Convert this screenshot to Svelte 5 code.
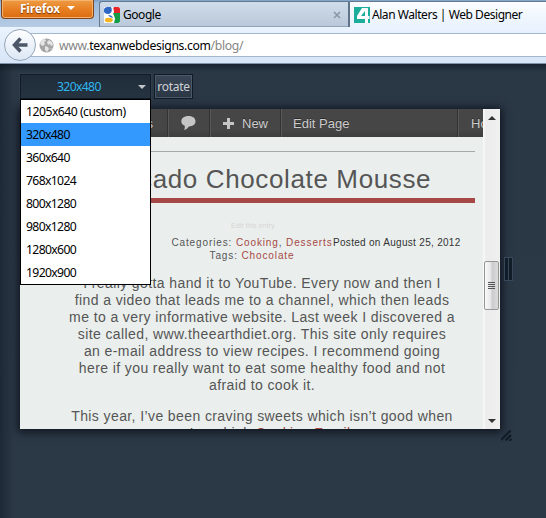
<script>
  const sizes = ['1205x640 (custom)', '320x480', '360x640', '768x1024', '800x1280', '980x1280', '1280x600', '1920x900'];
  const selected = '320x480';
  const lines = [
    'I really gotta hand it to YouTube. Every now and then I',
    'find a video that leads me to a channel, which then leads',
    'me to a very informative website. Last week I discovered a',
    'site called, www.theearthdiet.org. This site only requires',
    'an e-mail address to view recipes. I recommend going',
    'here if you really want to eat some healthy food and not',
    'afraid to cook it.'
  ];
</script>

<div class="window">
  <header class="chrome">
    <div class="tabs">
      <div class="firefox"><span>Firefox</span><i></i></div>
      <div class="tab google">
        <svg class="fav" width="16" height="16" viewBox="0 0 16 16">
          <path fill="#fff" d="M0 0h16v16H0z" />
          <path fill="#e8252a" d="M9 0h5a2 2 0 0 1 2 2v4h-6z" />
          <path fill="#159a45" d="M9 6h7v8a2 2 0 0 1-2 2h-4l1-4z" />
          <path fill="#2f68c4" d="M0 3a4 3 0 0 1 4-3h3q2 4-1 6.500Q2 8 0 5z" />
          <path fill="#fff" d="M8 0h2L9 1.500q1.500 3-.5 5Q11 9 10.500 12L9 15V10L5 8l3-3z" />
          <path fill="#2f68c4" d="M4 8q4 0 5 3l-3-1z" />
          <ellipse cx="4.800" cy="13" rx="4" ry="2.300" fill="#f5b321" />
        </svg>
        <span class="name">Google</span>
        <svg class="close" width="8" height="8" viewBox="0 0 8 8"><path d="M1 1l6 6M7 1L1 7" stroke="#8b97a5" stroke-width="1.700" /></svg>
      </div>
      <div class="tab active">
        <svg class="fav" width="16" height="16" viewBox="0 0 16 16">
          <path fill="#1cae9a" d="M0 0h16v16H0z" />
          <path fill="#fff" fill-rule="evenodd" d="M8 1h6v8h1.500v3H14v4h-3v-4H3V9zM11 4L7 9h4z" />
        </svg>
        <span class="name">Alan Walters | Web Designer</span>
      </div>
    </div>
    <div class="nav">
      <div class="url">
        <svg class="globe" width="15" height="15" viewBox="0 0 15 15">
          <circle cx="7.500" cy="7.500" r="7" fill="#a5a5a5" />
          <path fill="#e5e5e5" d="M3 2l3-1 1 2-2 1 1 2-2 2-2-1-1-2zM8 4l2-2 3 2 1 3-2 1-1-2-2 1zM6 8l3 1 1 2-2 3-2-2zM12 10l1 0-2 2z" />
        </svg>
        <span><em>www.</em>texanwebdesigns.com<em>/blog/</em></span>
      </div>
      <div class="back">
        <svg width="16" height="16" viewBox="0 0 16 16"><path d="M8.500 1.500L2.500 8l6 6.500M3 8h12.500" fill="none" stroke="#4b5767" stroke-width="3.500" /></svg>
      </div>
    </div>
  </header>

  <main>
    <div class="toolbar">
      <div class="select">
        <span>{selected}</span><i></i>
        <ul class="menu">
          {#each sizes as size}
            <li class:selected={size === selected}>{size}</li>
          {/each}
        </ul>
      </div>
      <div class="rotate">rotate</div>
    </div>

    <div class="device">
      <div class="page">
        <nav class="admin">
          <div class="cell sites">s</div>
          <div class="cell bubble">
            <svg width="15" height="14" viewBox="0 0 15 14"><path fill="#c5c5c5" d="M7.500 0C12 0 14.500 2.300 14.500 5.300S12 10.500 8 10.500Q6 13.500 3 14q1.300-2 .7-4.200Q.3 8.500.3 5.300C.3 2.300 3 0 7.500 0z" /></svg>
          </div>
          <div class="cell new">
            <svg width="11" height="11" viewBox="0 0 11 11"><path d="M5.500 0v11M0 5.500h11" stroke="#c5c5c5" stroke-width="3" /></svg>
            New
          </div>
          <div class="cell edit">Edit Page</div>
          <div class="cell howdy">Howdy</div>
        </nav>
        <article>
          <h1>Avocado Chocolate Mousse</h1>
          <div class="editlink">Edit this entry</div>
          <div class="meta">
            <div class="cats">Categories: <b>Cooking</b>, <b>Desserts</b><br />Tags: <b>Chocolate</b></div>
            <div class="date">Posted on August 25, 2012</div>
          </div>
          <p>{#each lines as line}<span>{line}</span>{/each}</p>
          <p><span>This year, I’ve been craving sweets which isn’t good when</span><span>you’re a high <b>Cooking</b> <b>Family</b></span></p>
        </article>
      </div>
      <div class="scroll">
        <i class="up"></i>
        <div class="thumb"><i></i><i></i><i></i><i></i></div>
        <i class="down"></i>
      </div>
      <div class="grip"><i></i><i></i></div>
      <svg class="corner" width="11" height="11" viewBox="0 0 11 11">
        <path d="M0 10L9.500.5M4.500 10.500l5.500-5.500M8.500 11l2-2" stroke="#101b27" stroke-width="2" />
      </svg>
    </div>
  </main>
</div>

<style>
  :global(body) { margin: 0; }
  * { box-sizing: border-box; }
  .window { width: 546px; height: 518px; overflow: hidden; display: flex; flex-direction: column; font-family: 'Noto Sans', sans-serif; font-size: 12px; color: #000; }
  .chrome { height: 64px; flex: none; background: #e9f2fd; }
  .tabs { height: 27px; display: flex; background: linear-gradient(#7ca0c6 0, #9bb9da 3px, #b7cce4 100%); }
  .firefox { width: 93px; height: 19px; margin: 0 5px 0 1px; border: 1px solid #7d451f; border-top: 0; border-radius: 0 0 4px 4px; background: linear-gradient(#ed9c46, #e88022 50%, #d96b10); box-shadow: inset 0 0 0 1px #f5b36d; color: #fff; font: bold 11.8px 'Open Sans', sans-serif; display: flex; align-items: center; padding: 0 0 2px 18px; gap: 7px; text-shadow: 0 1px 1px #7b3400; letter-spacing: -0.150px; }
  .firefox i { border: 4px solid transparent; border-top: 4px solid #fff; border-bottom: 0; margin-top: -1px; }
  .tab { display: flex; align-items: center; margin-top: 1px; height: 26px; border: 1px solid #66798f; border-bottom: 0; }
  .google { width: 251px; padding-left: 4px; border-radius: 3px 0 0 0; background: linear-gradient(#cfdcea, #b9c8d9); border-right: 2px solid #617389; box-shadow: inset 0 -1px #8fa3b9; }
  .google .name { flex: 1; }
  .google .close { margin-right: 7px; }
  .name { margin-left: 3px; font-size: 12px; letter-spacing: -0.450px; white-space: nowrap; }
  .active { flex: 1; padding-left: 4px; border-width: 1px 0 0 0; background: linear-gradient(#fbfdff, #e9f2fd); }
  .active .name { margin-left: 2px; }
  .nav { height: 37px; position: relative; padding-top: 6px; border-bottom: 1px solid #7e92aa; background: linear-gradient(#eaf3fe, #d7e5f6); }
  .url { height: 24px; margin-left: 20px; background: #fff; border: 1px solid #a3b7ce; border-width: 1px 0; display: flex; align-items: center; padding-left: 19px; gap: 5px; white-space: nowrap; }
  .url span { font-size: 12.200px; letter-spacing: -0.340px; }
  .url em { font-style: normal; color: #858585; }
  .back { position: absolute; left: 4px; top: 2px; width: 32px; height: 32px; border-radius: 50%; border: 1px solid #94a6bb; background: linear-gradient(#fdfeff, #dce7f4); display: flex; align-items: center; justify-content: center; }
  main { flex: 1; background: linear-gradient(90deg, rgba(8,18,28,.4), transparent 14px), linear-gradient(#182430 0, #2a3745 8px, #2b3846 100%); padding: 10px 0 0 20px; }
  .toolbar { display: flex; gap: 3px; height: 25px; }
  .select { position: relative; width: 131px; height: 25px; border: 1px solid #111b26; background: linear-gradient(#1f2c3a, #263340); color: #2fb6ef; display: flex; align-items: center; padding-left: 36px; box-shadow: 0 0 0 1px #303d4c; letter-spacing: -0.650px; font-size: 12.200px; }
  .select > i { margin-left: auto; margin-right: 4px; border: 4px solid transparent; border-top: 4px solid #c1c5ca; border-bottom: 0; }
  .menu { position: absolute; z-index: 5; left: -1px; top: 24px; width: 131px; height: 186px; margin: 0; padding: 0; border: 1px solid #000; background: #fff; color: #000; list-style: none; }
  .menu li { height: 23px; line-height: 24px; padding-left: 5px; white-space: nowrap; }
  .menu li:first-child { letter-spacing: -0.500px; }
  .menu .selected { background: #3399ff; }
  .rotate { width: 39px; height: 25px; border: 1px solid #111b26; box-shadow: inset 0 0 0 1px #4c5968; background: linear-gradient(#394655, #2a3644); color: #cdd1d6; line-height: 24px; text-align: center; letter-spacing: -0.300px; }
  .device { position: relative; display: flex; width: 480px; height: 320px; margin-top: 10px; box-shadow: 0 1px 8px 2px rgba(5,10,18,.75); }
  .page { width: 463px; height: 320px; overflow: hidden; color: #555; font-family: 'Liberation Sans', sans-serif; background: #eaefed; }
  .admin { height: 28px; display: flex; background: linear-gradient(#464646 75%, #3d3d3d); color: #ccc; font-size: 13px; text-shadow: 0 -1px #2b2b2b; }
  .cell { display: flex; align-items: center; flex: none; border-right: 1px solid #333; box-shadow: 1px 0 #585858; }
  .sites { width: 148px; justify-content: flex-end; padding-right: 14px; }
  .bubble { width: 42px; justify-content: center; }
  .new { width: 71px; padding-left: 13px; gap: 8px; }
  .edit { width: 177px; padding-left: 12px; }
  .howdy { padding-left: 13px; width: 80px; }
  article { padding: 14px 8px 0 29px; }
  h1 { margin: 0; height: 52px; border-top: 1px solid #a5a9a8; border-bottom: 5px solid #a64845; font-size: 26px; font-weight: normal; letter-spacing: 0.630px; line-height: 54px; text-align: center; white-space: nowrap; }
  .editlink { height: 33px; padding: 18px 0 0 182px; font-size: 7.200px; color: #d8d5d5; line-height: 10px; white-space: nowrap; }
  .meta { display: flex; line-height: 13px; white-space: nowrap; }
  .cats { width: 162px; margin-left: 122px; flex: none; text-align: center; font-size: 10px; letter-spacing: 0.880px; }
  .date { flex: 1; font-size: 10px; letter-spacing: 0.300px; line-height: 14px; color: #333; }
  b { font-weight: normal; color: #a64845; }
  p { margin: 13px 0 0; font-size: 14px; line-height: 17px; letter-spacing: 0.400px; text-align: center; }
  p span { display: block; white-space: nowrap; }
  p + p { margin-top: 14px; }
  .scroll { width: 17px; height: 320px; background: linear-gradient(90deg, #fafafa, #ececec 3px, #f0f0f0); display: flex; flex-direction: column; align-items: center; }
  .up { margin-top: 7px; border: 4px solid transparent; border-top: 0; border-bottom: 4px solid #333; }
  .thumb { width: 15px; height: 49px; margin-top: 141px; border: 1px solid #969696; border-radius: 2px; background: linear-gradient(90deg, #fafafa, #e5e5e5 45%, #cbcbcf 55%, #dcdcdc); display: flex; flex-direction: column; align-items: center; justify-content: center; gap: 1px; }
  .thumb i { width: 7px; height: 1px; background: #555; }
  .down { margin-top: auto; margin-bottom: 6px; border: 4px solid transparent; border-bottom: 0; border-top: 4px solid #333; }
  .grip { position: absolute; left: 485px; top: 149px; display: flex; gap: 1px; }
  .grip i { width: 3px; height: 22px; background: #101c28; outline: 1px solid #37485a; }
  .corner { position: absolute; left: 481px; top: 321px; }
</style>
